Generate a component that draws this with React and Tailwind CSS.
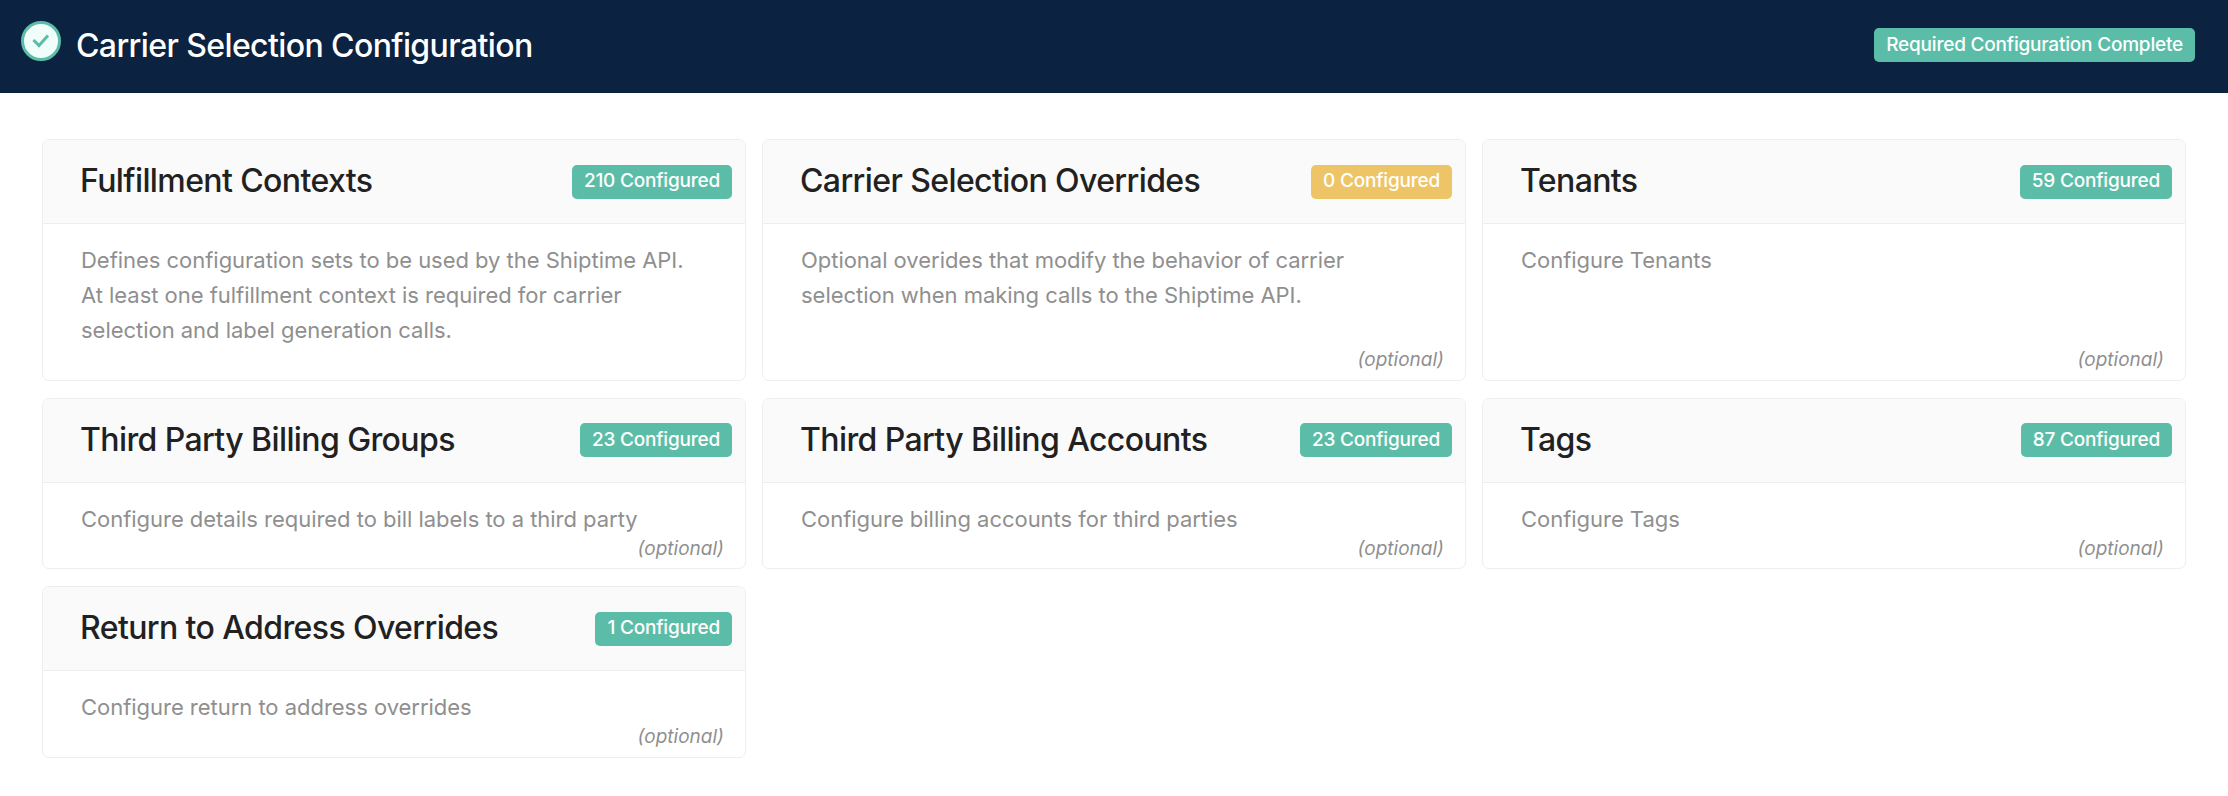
const cards = [
  { title: 'Fulfillment Contexts', count: 210, lines: ['Defines configuration sets to be used by the Shiptime API.', 'At least one fulfillment context is required for carrier', 'selection and label generation calls.'] },
  { title: 'Carrier Selection Overrides', count: 0, optional: true, lines: ['Optional overides that modify the behavior of carrier', 'selection when making calls to the Shiptime API.'] },
  { title: 'Tenants', count: 59, optional: true, lines: ['Configure Tenants'] },
  { title: 'Third Party Billing Groups', count: 23, optional: true, lines: ['Configure details required to bill labels to a third party'] },
  { title: 'Third Party Billing Accounts', count: 23, optional: true, lines: ['Configure billing accounts for third parties'] },
  { title: 'Tags', count: 87, optional: true, lines: ['Configure Tags'] },
  { title: 'Return to Address Overrides', count: 1, optional: true, lines: ['Configure return to address overrides'] },
];

function Badge({ children, warning }) {
  return (
    <span className={`flex h-[34px] shrink-0 items-center rounded-[5px] px-3 text-[19px] font-medium tracking-[-0.2px] text-white ${warning ? 'bg-[#eec566]' : 'bg-[#5bbda8]'}`}>
      {children}
    </span>
  );
}

function Card({ card }) {
  return (
    <div className="flex flex-col overflow-hidden rounded-[7px] border border-[#eeeeee] bg-white">
      {/* Header */}
      <div className="flex h-[84px] items-center justify-between border-b border-[#eeeeee] bg-[#fafafa] pl-[37px] pr-[13px]">
        <h2 className="-mt-px text-[32px] font-medium tracking-[-0.6px] text-[#212121]">{card.title}</h2>
        <Badge warning={card.count === 0}>{card.count} Configured</Badge>
      </div>

      {/* Body */}
      <div className="flex flex-1 flex-col pt-[19px]">
        <div className="pl-[38px] text-[22px] leading-[35px] tracking-[-0.03px] text-[#8f8f8f]">
          {card.lines.map((line) => (
            <p key={line}>{line}</p>
          ))}
        </div>
        <div className="mt-auto h-[31.5px] pr-[21px] text-right text-[19px] italic leading-[23px] text-[#8f8f8f]">
          {card.optional && '(optional)'}
        </div>
      </div>
    </div>
  );
}

export default function App() {
  return (
    <div className="min-h-screen bg-white font-['Inter',sans-serif]">
      <header className="flex h-[93px] items-center justify-between bg-[#0b2240] pl-[21px] pr-[33px]">
        <div className="flex items-center gap-[15px]">
          <div className="-mt-[11px] flex h-10 w-10 items-center justify-center rounded-full border-[3px] border-[#5bbda8] bg-[#f1fdfa]">
            <svg width="20" height="20" viewBox="0 0 20 20" fill="none" stroke="#5bbda8" strokeWidth="3">
              <path d="M2.5 9l5.5 5.5L17 4.5" />
            </svg>
          </div>
          <h1 className="-mt-0.5 text-[32px] font-medium tracking-[-0.6px] text-white">Carrier Selection Configuration</h1>
        </div>
        <div className="mb-[3px]">
          <Badge>Required Configuration Complete</Badge>
        </div>
      </header>

      <main className="grid grid-cols-3 gap-x-4 gap-y-[17px] px-[42px] pt-[46px]">
        {cards.map((card) => (
          <Card key={card.title} card={card} />
        ))}
      </main>
    </div>
  );
}
